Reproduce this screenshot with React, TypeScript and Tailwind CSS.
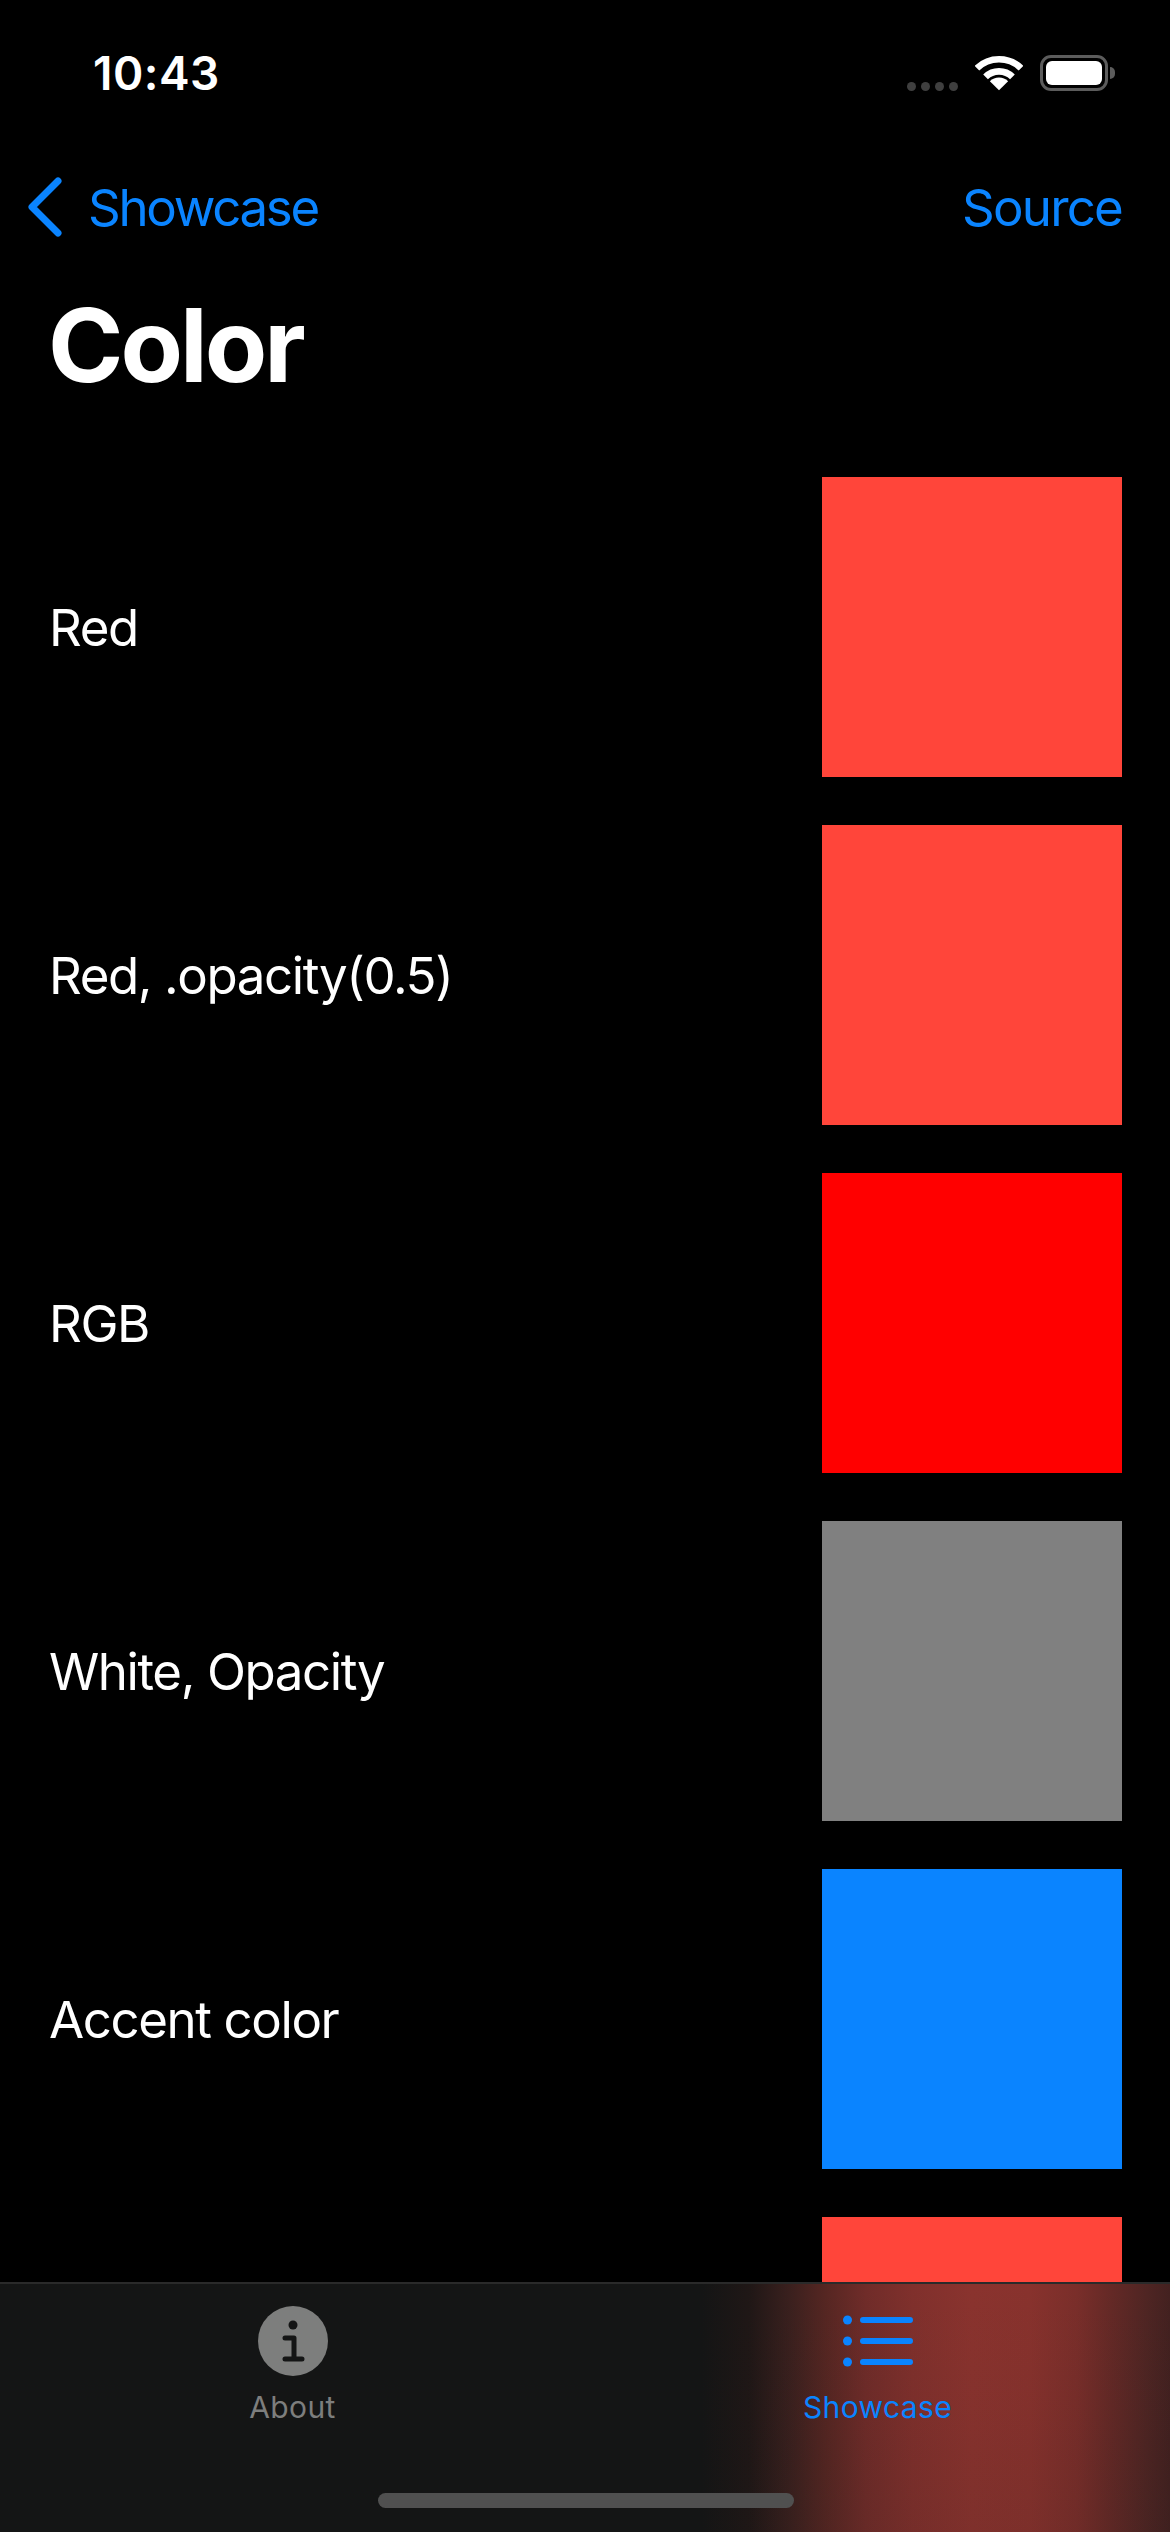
const font = "font-['Inter','Liberation_Sans',sans-serif]";

const rows = [
  { label: "Red", color: "bg-[#ff453a]" },
  { label: "Red, .opacity(0.5)", color: "bg-[#ff453a]" },
  { label: "RGB", color: "bg-[#ff0000]" },
  { label: "White, Opacity", color: "bg-[#808080]" },
  { label: "Accent color", color: "bg-[#0a84ff]" },
  { label: "", color: "bg-[#ff453a]" },
];

function StatusBar() {
  return (
    <div className="flex h-[144px] shrink-0 items-center justify-between pl-[93px] pr-[62px] pt-[2px]">
      <span className="text-[46px] font-semibold leading-none tracking-[0.5px] text-white">10:43</span>
      <div className="flex items-center">
        <div className="mr-[17px] mt-[26px] flex gap-[5px]">
          <span className="h-[9px] w-[9px] rounded-full bg-[#3f3f3f]" />
          <span className="h-[9px] w-[9px] rounded-full bg-[#3f3f3f]" />
          <span className="h-[9px] w-[9px] rounded-full bg-[#3f3f3f]" />
          <span className="h-[9px] w-[9px] rounded-full bg-[#3f3f3f]" />
        </div>
        <svg width="48" height="36" viewBox="0 0 50 36" className="mr-[17px]">
          <path d="M2 13 A33 33 0 0 1 48 13" fill="none" stroke="white" strokeWidth="7" />
          <path d="M11 22 A20 20 0 0 1 39 22" fill="none" stroke="white" strokeWidth="7" />
          <path d="M25 36 L15.5 26.5 A13.5 13.5 0 0 1 34.5 26.5 Z" fill="white" />
        </svg>
        <div className="relative flex h-[36px] w-[68px] items-center justify-center rounded-[11px] border-[3px] border-[#5c5c5c]">
          <div className="h-[24px] w-[56px] rounded-[6px] bg-white" />
          <span className="absolute right-[-10px] h-[12px] w-[5px] rounded-r-full bg-[#5c5c5c]" />
        </div>
      </div>
    </div>
  );
}

function NavBar() {
  return (
    <div className="flex h-[132px] shrink-0 items-center justify-between pb-[6px] pl-[27px] pr-[48px]">
      <div className="flex items-center gap-[25px]">
        <svg width="36" height="60" viewBox="0 0 36 60">
          <path d="M31 4 L5 30 L31 56" fill="none" stroke="#0a84ff" strokeWidth="7" strokeLinecap="round" strokeLinejoin="round" />
        </svg>
        <span className="text-[51px] leading-none tracking-[-2.3px] text-[#0a84ff]">Showcase</span>
      </div>
      <span className="text-[51px] leading-none tracking-[-1.8px] text-[#0a84ff]">Source</span>
    </div>
  );
}

function TabBar() {
  return (
    <div className="relative h-[250px] shrink-0 border-t-[2px] border-[#2a2a2a] bg-[linear-gradient(180deg,rgba(20,21,21,0)_0%,rgba(20,21,21,0.1)_100%),linear-gradient(90deg,#141515_0%,#141515_60%,#1f1716_64%,#3a201e_67.5%,#552622_70.5%,#702c29_74%,#80302c_78%,#8a332e_83%,#88322d_88%,#7a2e2a_92%,#642926_95%,#4f2523_98%,#432120_100%)]">
      <div className="flex">
        <div className="flex w-1/2 flex-col items-center pt-[22px]">
          <svg width="70" height="70" viewBox="0 0 70 70">
            <circle cx="35" cy="35" r="35" fill="#7d7e7d" />
            <circle cx="35" cy="19" r="4.5" fill="#141515" />
            <path d="M27 32 H36 V52 M27 53 H44" fill="none" stroke="#141515" strokeWidth="5" strokeLinecap="round" strokeLinejoin="round" />
          </svg>
          <span className="mt-[16px] text-[30px] leading-none tracking-[0.4px] text-[#7d7e7d]">About</span>
        </div>
        <div className="flex w-1/2 flex-col items-center pt-[22px]">
          <svg width="70" height="70" viewBox="0 0 70 70">
            <circle cx="4.5" cy="14" r="4.5" fill="#0a84ff" />
            <circle cx="4.5" cy="35" r="4.5" fill="#0a84ff" />
            <circle cx="4.5" cy="56" r="4.5" fill="#0a84ff" />
            <path d="M20 14 H67 M20 35 H67 M20 56 H67" stroke="#0a84ff" strokeWidth="6" strokeLinecap="round" />
          </svg>
          <span className="mt-[16px] text-[30px] leading-none tracking-[0.4px] text-[#0a84ff]">Showcase</span>
        </div>
      </div>
      <div className="absolute bottom-[24px] left-[378px] h-[15px] w-[416px] rounded-full bg-[#505050]" />
    </div>
  );
}

export default function App() {
  return (
    <main className={`flex h-[2532px] w-[1170px] flex-col overflow-hidden bg-black ${font}`}>
      <StatusBar />
      <NavBar />
      <h1 className="h-[132px] shrink-0 pl-[48px] pt-[9px] text-[102px] font-bold leading-[120px] tracking-[-3px] text-white">
        Color
      </h1>
      <div className="flex min-h-0 flex-1 flex-col gap-[48px] overflow-hidden pl-[49px] pr-[48px] pt-[69px]">
        {rows.map((row, index) => (
          <div key={index} className="flex shrink-0 items-center justify-between">
            <span className="text-[51px] leading-none tracking-[-1.4px] text-white">{row.label}</span>
            <div className={`h-[300px] w-[300px] ${row.color}`} />
          </div>
        ))}
      </div>
      <TabBar />
    </main>
  );
}
